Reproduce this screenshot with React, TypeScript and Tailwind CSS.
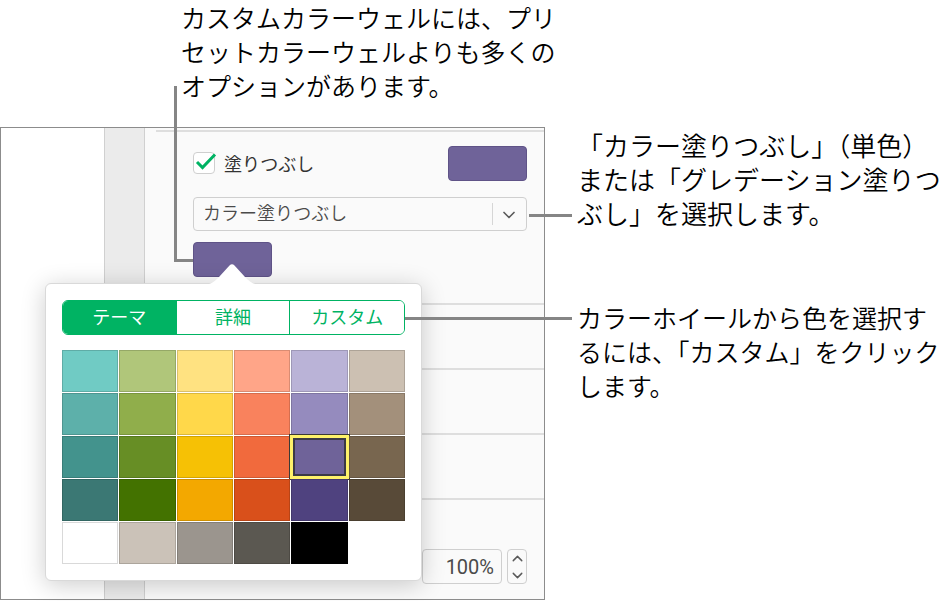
import { useState } from 'react';
import { ChevronDown, ChevronUp } from 'lucide-react';

const TABS = [
  { id: 'theme', label: 'テーマ' },
  { id: 'detail', label: '詳細' },
  { id: 'custom', label: 'カスタム' },
];

const COLORS = [
  '#70cbc4', '#b0c67a', '#ffe281', '#ffa588', '#bab3d7', '#ccc0b2',
  '#5db0aa', '#90ae4b', '#ffd84a', '#f9825d', '#958bbe', '#a3907b',
  '#43938d', '#678e25', '#f6c105', '#f16a3d', '#6f6399', '#78664f',
  '#3b7874', '#437200', '#f3a800', '#d9501b', '#4f427f', '#584a38',
  '#ffffff', '#cbc2b8', '#9b958e', '#5b5851', '#000000',
];

function Note({ lines, large }: { lines: string[]; large?: boolean }) {
  return (
    <p className={`${large ? 'text-[26px]' : 'text-[25px]'} leading-[34px] font-[350] text-black whitespace-nowrap`}>
      {lines.map(l => <span key={l} className="block">{l}</span>)}
    </p>
  );
}

function Palette() {
  const [tab, setTab] = useState('theme');
  const [picked, setPicked] = useState('#6f6399');

  return (
    <div className="absolute left-[44px] top-[155px] w-[377px] rounded-md border border-[#d9d9d9] bg-white p-4 shadow-[0_4px_24px_rgba(0,0,0,0.2)]">
      <svg className="absolute -top-5 left-[158px]" width="56" height="22" viewBox="0 0 56 22" aria-hidden="true">
        <path d="M2 22V20.500C8 20 11 17 15 13L25.500 1.500Q28-1 30.500 1.500L41 13C45 17 48 20 54 20.500V22Z" fill="#fff" />
      </svg>

      <div className="relative">
        <div className="grid grid-cols-3 h-[35px] rounded-md border border-[#00b363] divide-x divide-[#00b363] overflow-hidden">
          {TABS.map(t => (
            <button
              key={t.id}
              onClick={() => setTab(t.id)}
              className={tab === t.id
                ? 'bg-[#00b363] pb-1 text-white text-[18px] leading-7'
                : 'bg-white pb-1 text-[#00b363] text-[18px] leading-7'}
            >
              {t.label}
            </button>
          ))}
        </div>
        <span className="absolute left-full top-[17px] h-[3px] w-[167px] bg-[#858585]" />
      </div>

      <div className="mt-[15px] grid grid-cols-6 gap-px">
        {COLORS.map(c => (
          <button
            key={c}
            aria-label={c}
            onClick={() => setPicked(c)}
            style={{ backgroundColor: c }}
            className="relative h-[42px] border border-black/15"
          >
            {picked === c && (
              <span className="absolute -inset-[3px] border border-[#3c3a35] bg-[#fff26b] p-[3px]">
                <span className="block h-full border-2 border-[#3c3a45]" style={{ backgroundColor: c }} />
              </span>
            )}
          </button>
        ))}
      </div>
    </div>
  );
}

function Inspector() {
  const [fill, setFill] = useState(true);

  return (
    <div className="flex-1 bg-[#fafafa] pt-[2px]">
      <div className="ml-[11px] border-t-2 border-[#dedede]" />
      <div className="pl-12 pr-[17px] pt-[14px]">
        <div className="flex h-[35px] items-center justify-between">
          <label className="flex items-center gap-[9px] pb-[2px] text-[18px] leading-6 text-[#333]">
            <span className="relative block size-[22px]">
              <input
                type="checkbox"
                checked={fill}
                onChange={e => setFill(e.target.checked)}
                className="block size-[22px] appearance-none rounded-sm border border-[#cfcfcf] bg-white"
              />
              {fill && (
                <svg className="pointer-events-none absolute left-0 top-0 overflow-visible" width="22" height="22" viewBox="0 0 22 22" aria-hidden="true">
                  <path d="M4 10L9.500 15.500L22 2.500" fill="none" stroke="#00b363" strokeWidth="3" />
                </svg>
              )}
            </span>
            塗りつぶし
          </label>
          <button aria-label="塗りつぶしカラー" className="h-[35px] w-[79px] rounded-[4px] border border-[#5f5387] bg-[#6f6399]" />
        </div>

        <div className="relative mt-4">
          <select
            aria-label="塗りつぶしの種類"
            className="block h-[34px] w-full appearance-none rounded-[4px] border border-[#cfcfcf] bg-[#fafafa] px-[9px] pb-1 text-[18px] leading-6 font-[350] text-[#4a4a4a]"
          >
            <option>カラー塗りつぶし</option>
            <option>グレデーション塗りつぶし</option>
          </select>
          <span className="pointer-events-none absolute right-[34px] top-[6px] h-[22px] w-px bg-[#d6d6d6]" />
          <ChevronDown size={20} strokeWidth={2} className="pointer-events-none absolute right-2 top-2 text-[#5a5a5a]" />
          <span className="absolute left-full top-[17px] ml-[2px] h-[3px] w-[43px] bg-[#858585]" />
        </div>

        <button aria-label="カラーウェル" className="mt-[11px] block h-[35px] w-[79px] rounded-[4px] border border-[#5f5387] bg-[#6f6399]" />
      </div>

      <div className="mt-[26px] h-[65px] border-t-2 border-[#dedede]" />
      <div className="h-[65px] border-t-2 border-[#dedede]" />
      <div className="h-[65px] border-t-2 border-[#dedede]" />
      <div className="flex justify-end gap-[5px] border-t-2 border-[#dedede] pr-[17px] pt-[49px] pb-[15px]">
        <input
          aria-label="不透明度"
          defaultValue="100%"
          className="h-[35px] w-20 rounded-[4px] border border-[#cfcfcf] bg-[#fafafa] px-[7px] text-right font-['Roboto'] text-[20px] text-[#4a4a4a]"
        />
        <div className="flex h-[35px] w-5 flex-col items-center justify-between rounded-[4px] border border-[#cfcfcf] text-[#5a5a5a]">
          <button aria-label="増やす"><ChevronUp size={17} strokeWidth={2} /></button>
          <button aria-label="減らす"><ChevronDown size={17} strokeWidth={2} /></button>
        </div>
      </div>
    </div>
  );
}

export default function App() {
  return (
    <main className="min-h-screen bg-white font-['Noto_Sans_CJK_JP',sans-serif]">
      <header className="pl-[181px] pb-[25px]">
        <Note lines={['カスタムカラーウェルには、プリ', 'セットカラーウェルよりも多くの', 'オプションがあります。']} />
      </header>

      <div className="grid grid-cols-[545fr_399fr]">
        <section className="relative flex min-w-0 border border-[#8c8c8c]">
          <div className="w-[103px]" />
          <div className="w-[41px] border-x border-[#d0d0d0] bg-[#ebebeb]" />
          <Inspector />
          <span className="absolute -top-[42px] left-[173px] h-[176px] w-[19px] border-b-[3px] border-l-[3px] border-[#858585]" />
          <Palette />
        </section>

        <aside className="flex min-w-0 flex-col gap-[70px] pl-8 pt-px">
          <Note large lines={['「カラー塗りつぶし」（単色）', 'または「グレデーション塗りつ', 'ぶし」を選択します。']} />
          <Note lines={['カラーホイールから色を選択す', 'るには、「カスタム」をクリック', 'します。']} />
        </aside>
      </div>
    </main>
  );
}
